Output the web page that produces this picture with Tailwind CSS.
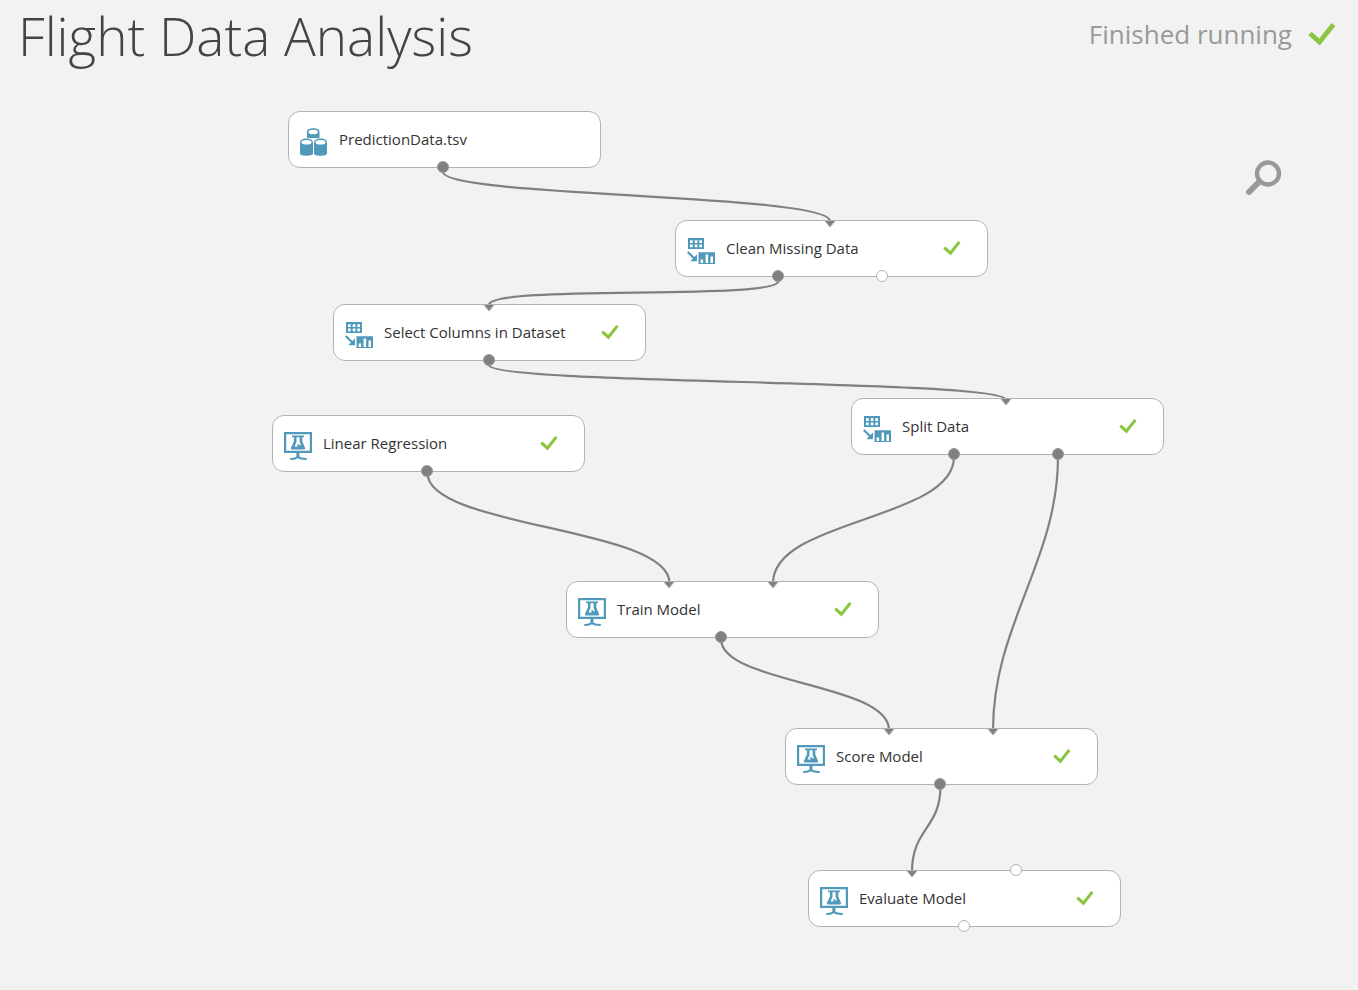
<!DOCTYPE html>
<html lang="en">
<head>
<meta charset="utf-8">
<meta name="viewport" content="width=device-width, initial-scale=1">
<title>Flight Data Analysis</title>
<script src="https://cdn.jsdelivr.net/npm/@tailwindcss/browser@4"></script>
</head>
<body class="relative min-h-screen bg-[#f2f2f2] font-['Open_Sans','Noto_Sans',sans-serif] text-[#333333]">
<svg class="hidden" aria-hidden="true">
  <symbol id="check" viewBox="0 0 28 24"><path d="M2 11.5 11.5 20 25.5 2.500" fill="none" stroke="#8bc53f" stroke-width="4.800"/></symbol>
  <symbol id="dataset" viewBox="0 0 28 28">
    <g fill="#5099bb">
      <path d="M7 3.500C7-.8 19.500-.8 19.500 3.500V10H7Z"/>
      <path d="M0 14.500C0 9 13 9 13 14.500V25.500C13 28.500 0 28.500 0 25.500Z"/>
      <path d="M14 14.500C14 9 27 9 27 14.500V25.500C27 28.500 14 28.500 14 25.500Z"/>
    </g>
    <g fill="#fff"><ellipse cx="13.200" cy="4" rx="4.700" ry="2.300"/><ellipse cx="6.500" cy="14.300" rx="5" ry="2.300"/><ellipse cx="20.500" cy="14.300" rx="5" ry="2.300"/></g>
  </symbol>
  <symbol id="transform" viewBox="0 0 28 28">
    <path fill="#5099bb" d="M1 1H17V12H1ZM11.500 15.200H28V27H11.500Z"/>
    <path fill="#fff" d="M3 3.300h2.700v2.700H3zM7.700 3.300h2.700v2.700H7.700zM12.300 3.300H15v2.700h-2.700zM3 7.600h2.700v2.700H3zM7.700 7.600h2.700v2.700H7.700zM12.300 7.600H15v2.700h-2.700zM13.600 22.500h2.500V26h-2.500zM18.600 17.500h2.500V26h-2.500zM23.500 19.500H26V26h-2.500z"/>
    <path d="M.7 15 8 22" stroke="#5099bb" stroke-width="2.200"/><path fill="#5099bb" d="M10 17.500V24.200H3.300Z"/>
  </symbol>
  <symbol id="model" viewBox="0 0 28 28">
    <path fill="none" stroke="#5099bb" stroke-width="2.200" d="M1.100 1.100H26.900V19.900H1.100Z"/>
    <path fill="#5099bb" d="M8 3.600H20V5.300H18.300V9.500L21 15.700Q21.600 17.400 20 17.400H8Q6.400 17.400 7 15.700L9.900 9.500V5.300H8ZM12.400 21H15.400V26H12.400Z"/>
    <path fill="#fff" d="M12.500 5.300H15.600V10L17 13.300H15V12H13.500V14.500H10.500L12.500 10Z"/>
    <path fill="none" stroke="#5099bb" stroke-width="2" stroke-linecap="round" d="M7 27Q11.500 27 13.900 25Q16.500 27 22 27"/>
  </symbol>
  <symbol id="arrow" viewBox="0 0 14 8"><path fill="#808080" stroke="#b3b3b3" stroke-width="1" d="M1.500 .5H12.500L7 7Z"/></symbol>
</svg>

<header class="flex items-start justify-between pr-[22px] pl-[18px]">
  <h1 class="text-[53px] leading-[72px] font-light text-[#444444]">Flight Data Analysis</h1>
  <p class="flex items-center gap-4 text-[26px] leading-[68px] text-[#999999]">Finished running <svg class="h-6 w-7" aria-hidden="true"><use href="#check"/></svg></p>
</header>

<button type="button" aria-label="Zoom" class="absolute top-[158px] left-[1244px]">
  <svg class="size-10" viewBox="0 0 40 40" fill="none" stroke="#999999"><circle cx="24" cy="15.500" r="11" stroke-width="4.400"/><path d="M15.500 23.500 5 34" stroke-width="6" stroke-linecap="round"/></svg>
</button>

<main>
  <svg class="absolute top-0 left-0 h-[990px] w-[1358px]" viewBox="0 0 1358 990" fill="none" stroke="#808080" stroke-width="2.200" aria-hidden="true">
    <path d="M443 172C443 197 830 194 830 221"/>
    <path d="M778.500 281C778.500 301 489 284 489 305"/>
    <path d="M489 365C489 385 1006 379 1006 400"/>
    <path d="M427.500 473C427.500 528 669.500 527 669.500 583"/>
    <path d="M954 457C954 520 773 519 773 583"/>
    <path d="M1058 457C1058 560 993 625 993 730"/>
    <path d="M721 639C721 684 889 683 889 730"/>
    <path d="M940.500 786C940.500 829 912 828 912 872"/>
  </svg>

  <section class="absolute top-[111px] left-[288px] flex h-[57px] w-[313px] items-center rounded-xl border border-[#b3b3b3] bg-white pr-[26px] pb-0.5 pl-[11px]">
    <svg class="mt-[6px] mr-[11px] size-7" aria-hidden="true"><use href="#dataset"/></svg>
    <h2 class="text-[15px] leading-5">PredictionData.tsv</h2>
    <i class="absolute -bottom-[6px] left-[148px] size-3 rounded-full border border-[#999999] bg-[#808080]"></i>
  </section>

  <section class="absolute top-[220px] left-[675px] flex h-[57px] w-[313px] items-center rounded-xl border border-[#b3b3b3] bg-white pr-[26px] pb-0.5 pl-[11px]">
    <svg class="mt-[6px] mr-[11px] size-7" aria-hidden="true"><use href="#transform"/></svg>
    <h2 class="text-[15px] leading-5">Clean Missing Data</h2>
    <svg class="ml-auto h-4 w-[18px]" aria-hidden="true"><use href="#check"/></svg>
    <svg class="absolute -top-px left-[147px] h-2 w-[14px]" aria-hidden="true"><use href="#arrow"/></svg>
    <i class="absolute -bottom-[6px] left-[96px] size-3 rounded-full border border-[#999999] bg-[#808080]"></i>
    <i class="absolute -bottom-[6px] left-[200px] size-3 rounded-full border border-[#b3b3b3] bg-white"></i>
  </section>

  <section class="absolute top-[304px] left-[333px] flex h-[57px] w-[313px] items-center rounded-xl border border-[#b3b3b3] bg-white pr-[26px] pb-0.5 pl-[11px]">
    <svg class="mt-[6px] mr-[11px] size-7" aria-hidden="true"><use href="#transform"/></svg>
    <h2 class="text-[15px] leading-5">Select Columns in Dataset</h2>
    <svg class="ml-auto h-4 w-[18px]" aria-hidden="true"><use href="#check"/></svg>
    <svg class="absolute -top-px left-[148px] h-2 w-[14px]" aria-hidden="true"><use href="#arrow"/></svg>
    <i class="absolute -bottom-[6px] left-[149px] size-3 rounded-full border border-[#999999] bg-[#808080]"></i>
  </section>

  <section class="absolute top-[398px] left-[851px] flex h-[57px] w-[313px] items-center rounded-xl border border-[#b3b3b3] bg-white pr-[26px] pb-0.5 pl-[11px]">
    <svg class="mt-[6px] mr-[11px] size-7" aria-hidden="true"><use href="#transform"/></svg>
    <h2 class="text-[15px] leading-5">Split Data</h2>
    <svg class="ml-auto h-4 w-[18px]" aria-hidden="true"><use href="#check"/></svg>
    <svg class="absolute -top-px left-[147px] h-2 w-[14px]" aria-hidden="true"><use href="#arrow"/></svg>
    <i class="absolute -bottom-[6px] left-[96px] size-3 rounded-full border border-[#999999] bg-[#808080]"></i>
    <i class="absolute -bottom-[6px] left-[200px] size-3 rounded-full border border-[#999999] bg-[#808080]"></i>
  </section>

  <section class="absolute top-[415px] left-[272px] flex h-[57px] w-[313px] items-center rounded-xl border border-[#b3b3b3] bg-white pr-[26px] pb-0.5 pl-[11px]">
    <svg class="mt-[6px] mr-[11px] size-7" aria-hidden="true"><use href="#model"/></svg>
    <h2 class="text-[15px] leading-5">Linear Regression</h2>
    <svg class="ml-auto h-4 w-[18px]" aria-hidden="true"><use href="#check"/></svg>
    <i class="absolute -bottom-[6px] left-[148px] size-3 rounded-full border border-[#999999] bg-[#808080]"></i>
  </section>

  <section class="absolute top-[581px] left-[566px] flex h-[57px] w-[313px] items-center rounded-xl border border-[#b3b3b3] bg-white pr-[26px] pb-0.5 pl-[11px]">
    <svg class="mt-[6px] mr-[11px] size-7" aria-hidden="true"><use href="#model"/></svg>
    <h2 class="text-[15px] leading-5">Train Model</h2>
    <svg class="ml-auto h-4 w-[18px]" aria-hidden="true"><use href="#check"/></svg>
    <svg class="absolute -top-px left-[95px] h-2 w-[14px]" aria-hidden="true"><use href="#arrow"/></svg>
    <svg class="absolute -top-px left-[199px] h-2 w-[14px]" aria-hidden="true"><use href="#arrow"/></svg>
    <i class="absolute -bottom-[6px] left-[148px] size-3 rounded-full border border-[#999999] bg-[#808080]"></i>
  </section>

  <section class="absolute top-[728px] left-[785px] flex h-[57px] w-[313px] items-center rounded-xl border border-[#b3b3b3] bg-white pr-[26px] pb-0.5 pl-[11px]">
    <svg class="mt-[6px] mr-[11px] size-7" aria-hidden="true"><use href="#model"/></svg>
    <h2 class="text-[15px] leading-5">Score Model</h2>
    <svg class="ml-auto h-4 w-[18px]" aria-hidden="true"><use href="#check"/></svg>
    <svg class="absolute -top-px left-[96px] h-2 w-[14px]" aria-hidden="true"><use href="#arrow"/></svg>
    <svg class="absolute -top-px left-[200px] h-2 w-[14px]" aria-hidden="true"><use href="#arrow"/></svg>
    <i class="absolute -bottom-[6px] left-[148px] size-3 rounded-full border border-[#999999] bg-[#808080]"></i>
  </section>

  <section class="absolute top-[870px] left-[808px] flex h-[57px] w-[313px] items-center rounded-xl border border-[#b3b3b3] bg-white pr-[26px] pb-0.5 pl-[11px]">
    <svg class="mt-[6px] mr-[11px] size-7" aria-hidden="true"><use href="#model"/></svg>
    <h2 class="text-[15px] leading-5">Evaluate Model</h2>
    <svg class="ml-auto h-4 w-[18px]" aria-hidden="true"><use href="#check"/></svg>
    <svg class="absolute -top-px left-[96px] h-2 w-[14px]" aria-hidden="true"><use href="#arrow"/></svg>
    <i class="absolute -top-[7px] left-[201px] size-3 rounded-full border border-[#b3b3b3] bg-white"></i>
    <i class="absolute -bottom-[6px] left-[149px] size-3 rounded-full border border-[#b3b3b3] bg-white"></i>
  </section>
</main>
</body>
</html>
